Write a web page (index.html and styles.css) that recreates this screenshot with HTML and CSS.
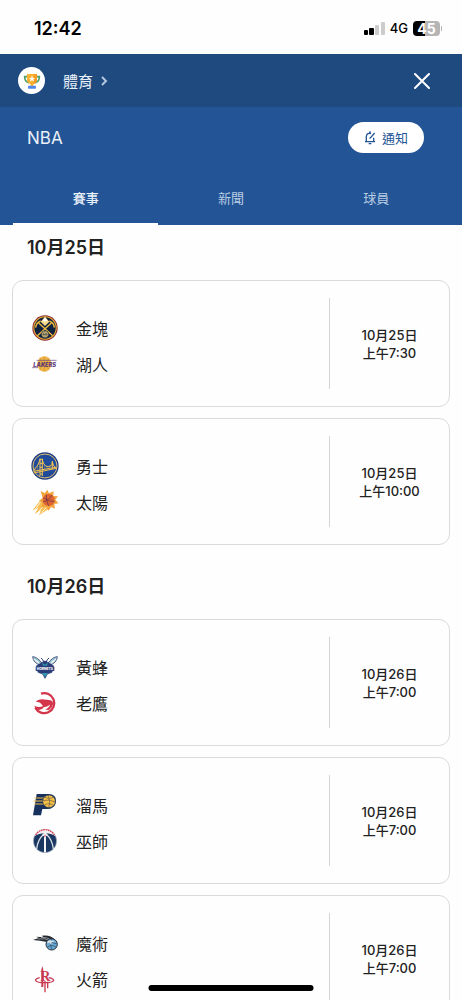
FILE: index.html
```html
<!DOCTYPE html>
<html lang="zh-Hant">
<head>
    <meta charset="utf-8">
    <meta name="viewport" content="width=device-width, initial-scale=1">
    <title>NBA</title>
    <link rel="stylesheet" href="styles.css">
</head>
<body>
    <div class="status-bar">
        <span class="clock">12:42</span>
        <div class="status-icons">
            <svg class="signal" viewBox="0 0 21 14" aria-hidden="true">
                <rect x="0" y="9" width="4" height="5" rx="1"/>
                <rect x="5" y="7" width="5" height="7" rx="1"/>
                <rect x="11" y="4" width="4" height="10" rx="1" fill="#ccc"/>
                <rect x="17" y="1" width="4" height="13" rx="1" fill="#ccc"/>
            </svg>
            <span class="network">4G</span>
            <div class="battery"><span class="battery-level">45</span></div>
        </div>
    </div>

    <nav class="top-bar">
        <a class="breadcrumb" href="#sports">
            <span class="trophy">
                <svg viewBox="0 0 54 54" aria-hidden="true">
                    <path d="M14 14H5q0 16 13 18M40 14h9q0 16-13 18" fill="none" stroke="#4e9f68" stroke-width="5"/>
                    <path d="M12 6h30v15q0 13-11 16v6h-8v-6q-11-3-11-16z" fill="#fbb12f"/>
                    <path d="M33 6h9v15q0 13-11 16z" fill="#f59a22"/>
                    <path d="M27 11l3 7h7l-6 4 2 7-6-4-6 4 2-7-6-4h7z" fill="#fff"/>
                    <rect x="15" y="41" width="24" height="9" rx="2" fill="#5089ee"/>
                </svg>
            </span>
            <span>體育</span>
            <svg class="chevron" viewBox="0 0 8 10" aria-hidden="true"><path d="M2 1l4 4-4 4"/></svg>
        </a>
        <button class="close" type="button" aria-label="關閉">
            <svg viewBox="0 0 16 16" aria-hidden="true"><path d="M1 1l14 14M15 1L1 15"/></svg>
        </button>
    </nav>

    <header class="league">
        <div class="league-row">
            <h1>NBA</h1>
            <button class="notify" type="button">
                <svg viewBox="0 0 36 42" aria-hidden="true">
                    <path d="M21 8q-12-4-14 8v15M3 32h30M29 20v12M14 38h8M18 1v6M20 20l12-14M17 23l3-4"/>
                </svg>
                <span>通知</span>
            </button>
        </div>
        <div class="tabs">
            <a class="tab active" href="#games">賽事</a>
            <a class="tab" href="#news">新聞</a>
            <a class="tab" href="#players">球員</a>
        </div>
    </header>

    <main class="schedule">
        <section class="day">
            <h2>10月25日</h2>
            <div class="games">
                <article class="game">
                    <ul class="teams">
                        <li>
                            <svg class="logo" viewBox="0 0 84 84" aria-hidden="true">
                                <circle cx="42" cy="42" r="38" fill="#8b2c35"/>
                                <circle cx="42" cy="42" r="35" fill="#eab534"/>
                                <circle cx="42" cy="42" r="32" fill="#10203f"/>
                                <path d="M42 8l13 15-13 13-13-13z" fill="#f7d98a"/>
                                <path d="M42 10l8 12-5-2-3 5-4-5-5 3z" fill="#fff"/>
                                <path d="M19 65l42-38M65 65L23 27" stroke="#f1bd3d" stroke-width="4"/>
                                <path d="M14 41q1-15 15-20M70 41q-1-15-15-20" fill="none" stroke="#f1bd3d" stroke-width="4"/>
                                <circle cx="42" cy="61" r="11" fill="#f1cf72" stroke="#10203f" stroke-width="2"/>
                                <path d="M31 61h22M42 50v22M35 53q6 8 0 16M49 53q-6 8 0 16" fill="none" stroke="#30405b" stroke-width="2"/>
                            </svg>
                            <span>金塊</span>
                        </li>
                        <li>
                            <svg class="logo" viewBox="0 0 84 84" aria-hidden="true">
                                <ellipse cx="40" cy="42" rx="21" ry="23" fill="#efb344"/>
                                <path d="M40 19v46M20 36q20 10 40 0M26 23q12 19 0 38M54 23q-12 19 0 38" fill="none" stroke="#a77a35" stroke-width="1"/>
                                <path d="M17 31h60M3 53h18" stroke="#644281" stroke-width="2"/>
                                <text class="wordmark lakers" x="7" y="50" font-size="17">LAKERS</text>
                            </svg>
                            <span>湖人</span>
                        </li>
                    </ul>
                    <p class="time">10月25日<br>上午7:30</p>
                </article>
                <article class="game">
                    <ul class="teams">
                        <li>
                            <svg class="logo" viewBox="0 0 84 84" aria-hidden="true">
                                <circle cx="42" cy="42" r="41" fill="#213f83"/>
                                <circle cx="42" cy="42" r="36" fill="#204b9a" stroke="#dfbd73" stroke-width="3"/>
                                <path d="M8 63l68-14M7 58l66-12" stroke="#f1bd4b" stroke-width="3"/>
                                <path d="M27 72V20M34 72V20M25 22h11M27 34h7M27 46h7M27 66h7" stroke="#f5c453" stroke-width="3"/>
                                <path d="M8 55q13-12 19-31M34 24q7 28 26 17 4-3 4-12M64 29q1 14 12 19M64 27v25" fill="none" stroke="#f5c453" stroke-width="3"/>
                                <path d="M13 50v10M20 42v17M41 39v17M48 44v11M55 44v10" stroke="#f5c453" stroke-width="1"/>
                            </svg>
                            <span>勇士</span>
                        </li>
                        <li>
                            <svg class="logo" viewBox="0 0 84 84" aria-hidden="true">
                                <path d="M33 30L5 67l17-7-11 18 19-12-6 16 35-23z" fill="#f8bd54"/>
                                <path d="M34 34L12 66M42 48L22 72M50 54L30 76" stroke="#fff3cf" stroke-width="3"/>
                                <path d="M29 8l12 8 8-11 5 11 14-6-1 14 14 1-8 10 10 11-13 2 2 14-12-5-7 11-8-12-14 2 3-13-10-7 11-7z" fill="#f4a43d"/>
                                <circle cx="53" cy="36" r="18" fill="#df6433"/>
                                <path d="M37 29q20 13 34 12M46 20q-2 17 7 34M36 42q20-5 26-21" fill="none" stroke="#613048" stroke-width="2"/>
                            </svg>
                            <span>太陽</span>
                        </li>
                    </ul>
                    <p class="time">10月25日<br>上午10:00</p>
                </article>
            </div>
        </section>

        <section class="day">
            <h2>10月26日</h2>
            <div class="games">
                <article class="game">
                    <ul class="teams">
                        <li>
                            <svg class="logo" viewBox="0 0 84 84" aria-hidden="true">
                                <path d="M34 32Q20 12 5 11q2 19 23 25zM50 32q14-20 29-21-2 19-23 25z" fill="#e5eff3" stroke="#40577c" stroke-width="3"/>
                                <path d="M10 15q13 5 20 18M74 15q-13 5-20 18" fill="none" stroke="#268ca6" stroke-width="2"/>
                                <path d="M30 15q7 5 8 12h8q1-7 8-12" fill="none" stroke="#293c78" stroke-width="3"/>
                                <path d="M30 30l12-6 12 6 13 8-4 20-14 5-7 13-7-13-14-5-4-20z" fill="#293c78" stroke="#293c78" stroke-width="2"/>
                                <path d="M33 29l9 6 9-6-3 9H36zM33 60h18l-9 12z" fill="#3096b0"/>
                                <rect x="14" y="40" width="56" height="14" rx="2" fill="#2c3d7a"/>
                                <text class="wordmark hornets" x="17" y="51" font-size="10">HORNETS</text>
                            </svg>
                            <span>黃蜂</span>
                        </li>
                        <li>
                            <svg class="logo" viewBox="0 0 84 84" aria-hidden="true">
                                <path d="M30 14A30 30 0 1 1 13 56" fill="none" stroke="#d4354b" stroke-width="7"/>
                                <path d="M10 50q14 7 26 1l-7-8q-5-5-14-4 4-8 19-8l25 3q8 3 7 12-1 9-12 17l-11-1q13-7 14-15-9 7-19 8-4 8-14 8-10 0-14-13z" fill="#d4354b"/>
                            </svg>
                            <span>老鷹</span>
                        </li>
                    </ul>
                    <p class="time">10月26日<br>上午7:00</p>
                </article>
                <article class="game">
                    <ul class="teams">
                        <li>
                            <svg class="logo" viewBox="0 0 84 84" aria-hidden="true">
                                <path d="M17 9h35q25 0 23 23-3 22-28 22H34l-4 19H6z" fill="#17315e"/>
                                <path d="M10 21h30M8 30h30M10 39h28" stroke="#f4bf47" stroke-width="3"/>
                                <circle cx="54" cy="31" r="19" fill="#f4bf47" stroke="#17315e" stroke-width="2"/>
                                <path d="M36 29q18-6 36 4M51 12q8 18 3 37M40 18q12 9 28 1M39 43q15-10 29 1" fill="none" stroke="#665b45" stroke-width="2"/>
                            </svg>
                            <span>溜馬</span>
                        </li>
                        <li>
                            <svg class="logo" viewBox="0 0 84 84" aria-hidden="true">
                                <circle cx="42" cy="42" r="35" fill="#193761" stroke="#b9c1cc" stroke-width="2"/>
                                <path d="M10 28q9-21 32-22 23 1 32 22-13-9-32-9T10 28z" fill="#f4eef0"/>
                                <path d="M14 24q9-15 28-16 19 1 28 16" fill="none" stroke="#d2374b" stroke-width="4" stroke-dasharray="5 2"/>
                                <path d="M38 22Q20 38 17 66M46 22q18 16 21 44" fill="none" stroke="#dbe1e8" stroke-width="4"/>
                                <path d="M42 14l8 9-5 5v48h-6V28l-5-5z" fill="#f3f5f7"/>
                                <path d="M42 21l2 6-2 5-2-5z" fill="#bd394e"/>
                            </svg>
                            <span>巫師</span>
                        </li>
                    </ul>
                    <p class="time">10月26日<br>上午7:00</p>
                </article>
                <article class="game">
                    <ul class="teams">
                        <li>
                            <svg class="logo" viewBox="0 0 84 84" aria-hidden="true">
                                <path d="M6 33l17-6-7-4 22 2-6-5q26-4 39 11l6 11-14-6-19 2q-16-3-38-5z" fill="#24272d"/>
                                <path d="M20 30q22-4 42 6M30 25q17-1 30 7" fill="none" stroke="#bfc7ce" stroke-width="2"/>
                                <circle cx="62" cy="46" r="17" fill="#6aa9d2" stroke="#26303b" stroke-width="3"/>
                                <path d="M46 41q15-5 31 4M49 54q14-9 27 1M62 30q-7 15 0 31" fill="none" stroke="#26405a" stroke-width="2"/>
                                <path d="M50 36q10-6 22 3l-10 1-2 7-4-6-8 2z" fill="#d8e1e7"/>
                            </svg>
                            <span>魔術</span>
                        </li>
                        <li>
                            <svg class="logo" viewBox="0 0 84 84" aria-hidden="true">
                                <path d="M26 38Q13 41 14 46q2 7 27 7t27-7q0-5-15-8" fill="none" stroke="#c83a50" stroke-width="4"/>
                                <path d="M31 66V14l3-11 3 11v52zM40 82V48h4v34zM48 70V50h4v20z" fill="#c83a50"/>
                                <text class="wordmark rockets" x="28" y="48" font-size="42">R</text>
                            </svg>
                            <span>火箭</span>
                        </li>
                    </ul>
                    <p class="time">10月26日<br>上午7:00</p>
                </article>
            </div>
        </section>
    </main>

    <div class="home-indicator"></div>
</body>
</html>
```
FILE: styles.css
```css
* {
    box-sizing: border-box;
}

body {
    font-family: Inter, "Noto Sans CJK TC", sans-serif;
    background-color: #fefefe;
    color: #222;
    margin: 0;
    height: 100vh;
    display: flex;
    flex-direction: column;
    overflow: hidden;
}

h1, h2, p, ul {
    margin: 0;
    padding: 0;
}

a {
    color: inherit;
    text-decoration: none;
}

button {
    font: inherit;
    border: none;
    cursor: pointer;
}

.status-bar {
    display: flex;
    justify-content: space-between;
    align-items: center;
    flex-shrink: 0;
    height: 54px;
    padding: 2px 22px 0 34px;
    color: #000;
}

.clock {
    font-size: 18px;
    font-weight: 600;
}

.status-icons {
    display: flex;
    align-items: center;
    gap: 5px;
}

.signal {
    width: 21px;
    height: 14px;
}

.network {
    font-size: 13px;
    font-weight: 500;
}

.battery {
    position: relative;
    width: 27px;
    height: 15px;
    border-radius: 4px;
    background: linear-gradient(90deg, #000 45%, #b5b5b5 45%);
    color: #fff;
    font-size: 14px;
    font-weight: 700;
    line-height: 15px;
    text-align: center;
}

.battery::after {
    content: "";
    position: absolute;
    top: 5px;
    right: -2px;
    width: 1px;
    height: 5px;
    background-color: #b5b5b5;
}

.top-bar {
    display: flex;
    justify-content: space-between;
    align-items: center;
    flex-shrink: 0;
    height: 53px;
    padding: 0 32px 0 18px;
    background-color: #1e4a80;
    color: #e9f0f8;
}

.breadcrumb {
    display: flex;
    align-items: center;
    gap: 7px;
    font-size: 15px;
}

.trophy {
    display: flex;
    width: 27px;
    height: 27px;
    margin-right: 11px;
    border-radius: 50%;
    background-color: #fff;
}

.trophy svg {
    width: 18px;
    height: 18px;
    margin: auto;
}

.chevron {
    width: 8px;
    height: 10px;
    fill: none;
    stroke: #b4c7dd;
    stroke-width: 2;
}

.close {
    display: flex;
    padding: 0;
    background: none;
}

.close svg {
    width: 16px;
    height: 16px;
    stroke: #fff;
    stroke-width: 2;
    stroke-linecap: round;
}

.league {
    flex-shrink: 0;
    background-color: #235596;
    color: #e9f0f8;
}

.league-row {
    display: flex;
    justify-content: space-between;
    align-items: center;
    padding: 15px 38px 0 27px;
}

.league h1 {
    font-size: 17px;
    font-weight: 400;
}

.notify {
    display: flex;
    justify-content: center;
    align-items: center;
    gap: 6px;
    width: 76px;
    height: 31px;
    padding: 0;
    border-radius: 16px;
    background-color: #fff;
    color: #235596;
    font-size: 13px;
    line-height: 18px;
}

.notify svg {
    width: 12px;
    height: 14px;
    fill: none;
    stroke: #235596;
    stroke-width: 4;
}

.tabs {
    display: flex;
    padding: 19px 13px 0;
}

.tab {
    flex: 1;
    height: 53px;
    border-bottom: 2px solid transparent;
    color: #b9cce3;
    font-size: 13px;
    line-height: 53px;
    text-align: center;
}

.tab.active {
    border-bottom-color: #fff;
    color: #e9f0f8;
    font-weight: 500;
}

.schedule {
    flex: 1;
    min-height: 0;
    padding: 0 12px;
    overflow-y: auto;
    scrollbar-width: none;
}

.day {
    padding-top: 11px;
}

.day + .day {
    padding-top: 30px;
}

.day h2 {
    margin: 0 15px 20px;
    font-size: 18px;
    font-weight: 600;
    line-height: 24px;
}

.games {
    display: flex;
    flex-direction: column;
    gap: 11px;
}

.game {
    display: flex;
    padding: 17px 0;
    border: 1px solid #dadbde;
    border-radius: 11px;
}

.teams {
    flex: 1;
    padding: 12px 18px 7px;
    list-style: none;
}

.teams li {
    display: flex;
    align-items: center;
    gap: 17px;
    height: 36px;
    font-size: 16px;
}

.logo {
    width: 28px;
    height: 28px;
}

.wordmark {
    font-family: Inter, sans-serif;
    font-weight: 800;
}

.lakers {
    fill: #583278;
    font-style: italic;
}

.hornets {
    fill: #fff;
}

.rockets {
    fill: #c83a50;
    font-family: "Liberation Serif", serif;
    font-weight: 700;
}

.time {
    display: flex;
    flex-direction: column;
    justify-content: center;
    width: 120px;
    border-left: 1px solid #d3d4d6;
    font-size: 13px;
    font-weight: 500;
    line-height: 18px;
    text-align: center;
}

.home-indicator {
    position: fixed;
    bottom: 9px;
    left: 50%;
    width: 165px;
    height: 6px;
    border-radius: 3px;
    background-color: #000;
    transform: translateX(-50%);
}
```
